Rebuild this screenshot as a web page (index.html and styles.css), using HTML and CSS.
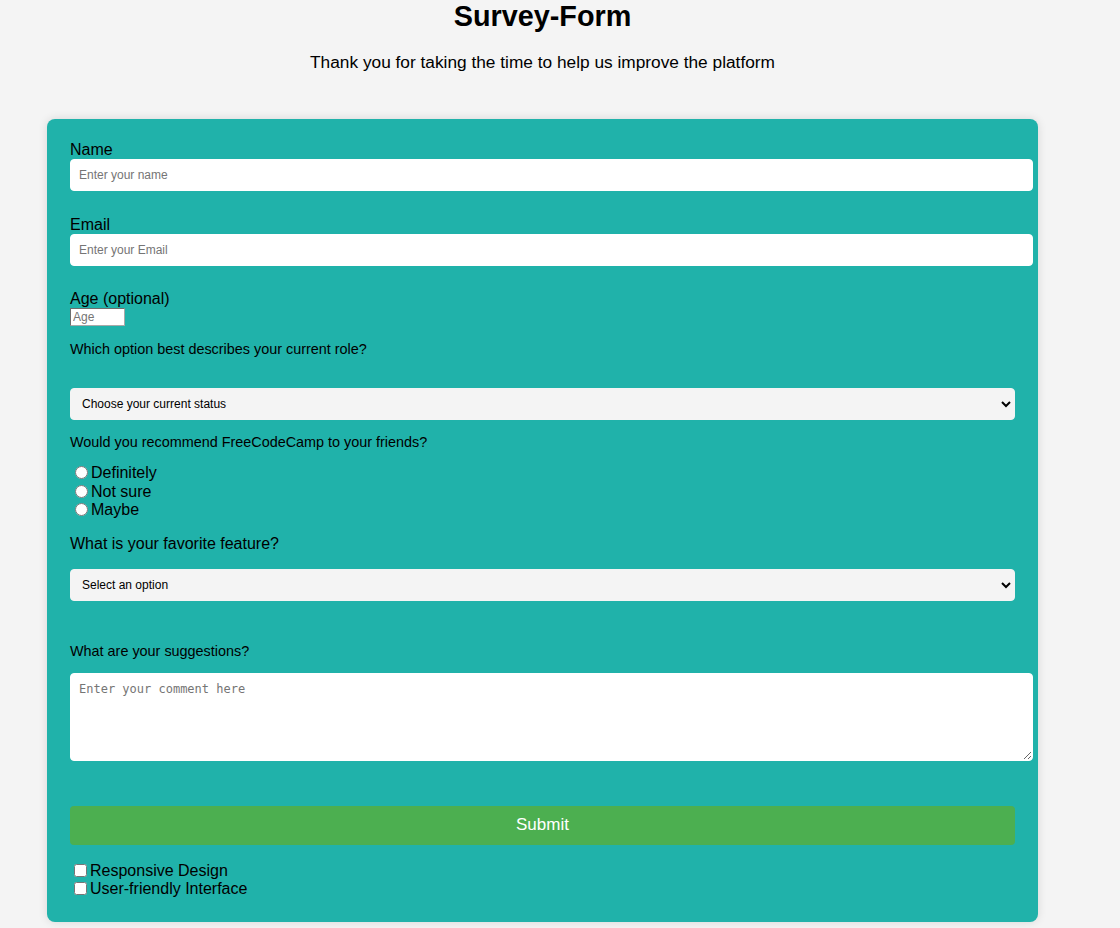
FILE: index.html
```html
<!DOCTYPE html>
<html lang="en">
<head>
<meta charset="utf-8">
<title>Survey-Form</title>
<link rel="stylesheet" href="styles.css">
</head>
<body>
<header class="header">
  <h1 class="title">Survey-Form</h1>
  <p class="description">Thank you for taking the time to help us improve the platform</p>
</header>
<form class="survey">
  <div class="form-group">
    <label class="field-label" for="name">Name</label>
    <input class="text-input" id="name" type="text" placeholder="Enter your name">
  </div>
  <div class="form-group">
    <label class="field-label" for="email">Email</label>
    <input class="text-input" id="email" type="email" placeholder="Enter your Email">
  </div>
  <div class="form-group age-group">
    <label class="field-label" for="age">Age (optional)</label>
    <input class="age-input" id="age" type="number" placeholder="Age">
  </div>
  <p class="question">Which option best describes your current role?</p>
  <select class="dropdown role-select">
    <option>Choose your current status</option>
    <option>Student</option>
    <option>Full time job</option>
    <option>Other</option>
  </select>
  <p class="question">Would you recommend FreeCodeCamp to your friends?</p>
  <div class="choices">
    <label class="choice"><input class="mark" type="radio" name="rec">Definitely</label>
    <label class="choice"><input class="mark" type="radio" name="rec">Not sure</label>
    <label class="choice"><input class="mark" type="radio" name="rec">Maybe</label>
  </div>
  <label class="field-label feature-label" for="feature">What is your favorite feature?</label>
  <select class="dropdown feature-select" id="feature">
    <option>Select an option</option>
    <option>Challenges</option>
    <option>Projects</option>
    <option>Community</option>
  </select>
  <p class="question suggestions">What are your suggestions?</p>
  <textarea class="comment" placeholder="Enter your comment here"></textarea>
  <button class="submit" type="button">Submit</button>
  <div class="checks">
    <label class="choice"><input class="mark box" type="checkbox">Responsive Design</label>
    <label class="choice"><input class="mark box" type="checkbox">User-friendly Interface</label>
  </div>
</form>
</body>
</html>
```

FILE: styles.css
```css
body {
  margin: 0;
  background: #f4f4f4;
  font-family: "Liberation Sans", Arial, sans-serif;
  color: #000;
}

.header {
  width: 1085px;
  text-align: center;
}

.title {
  margin: 0;
  font-size: 28.8px;
  font-weight: bold;
}

.description {
  margin: 19px 0 0;
  font-size: 17.3px;
}

.survey {
  box-sizing: border-box;
  width: 991px;
  margin: 46px 0 8px 47px;
  padding: 22px 23px 23px;
  background: #20b2aa;
  border-radius: 8px;
  box-shadow: 0 0 10px rgba(0, 0, 0, 0.12);
}

.form-group {
  margin-bottom: 24.6px;
}

.age-group {
  margin-bottom: 0;
}

.field-label {
  display: block;
  font-size: 16px;
}

.text-input {
  display: block;
  width: 100%;
  height: 14px;
  padding: 8px;
  border: 1px solid #fff;
  border-radius: 4px;
  background: #fff;
  font-family: "Liberation Sans", Arial, sans-serif;
  font-size: 12px;
  outline: none;
}

.text-input::placeholder,
.comment::placeholder {
  color: #757575;
}

.age-input {
  display: block;
  box-sizing: border-box;
  width: 55px;
  height: 18px;
  margin: 0;
  padding: 1px 2px;
  border: 1px solid #767676;
  border-color: #6d6d6d #a9a9a9 #a9a9a9 #6d6d6d;
  background: #fff;
  font-family: "Liberation Sans", Arial, sans-serif;
  font-size: 12px;
}

.question {
  margin: 14.4px 0;
  font-size: 14.4px;
}

.dropdown {
  display: block;
  box-sizing: border-box;
  width: 100%;
  height: 32px;
  padding: 0 7px;
  border: 1px solid #f4f4f4;
  border-radius: 4px;
  background: #f4f4f4;
  color: #000;
  font-family: "Liberation Sans", Arial, sans-serif;
  font-size: 12px;
}

.role-select {
  margin-top: 31px;
}

.choice {
  display: block;
  font-size: 16px;
  line-height: 18.4px;
}

.mark {
  width: 13px;
  height: 13px;
  margin: 0 3px 0 5px;
  vertical-align: -1px;
}

.mark.box {
  margin: 0 3px 0 4px;
}

.feature-label {
  margin-top: 15px;
}

.feature-select {
  margin-top: 16px;
}

.suggestions {
  margin-top: 42px;
}

.comment {
  display: block;
  width: 100%;
  height: 70px;
  margin: 0;
  padding: 8px;
  border: 1px solid #fff;
  border-radius: 4px;
  background: #fff;
  font-family: "DejaVu Sans Mono", monospace;
  font-size: 12px;
}

.submit {
  display: block;
  width: 100%;
  height: 39px;
  margin-top: 45px;
  border: none;
  border-radius: 4px;
  background: #4caf50;
  color: #fff;
  font-family: "Liberation Sans", Arial, sans-serif;
  font-size: 17px;
}

.checks {
  margin-top: 17px;
}
```
